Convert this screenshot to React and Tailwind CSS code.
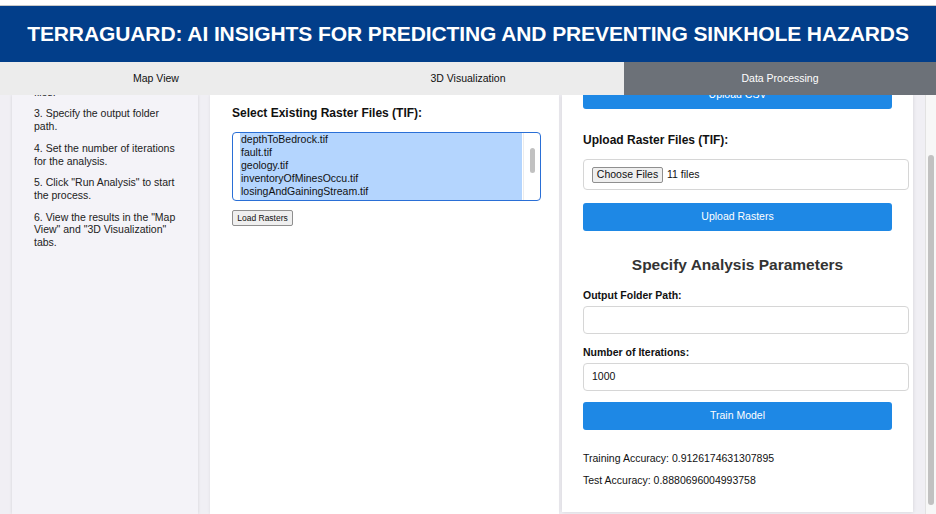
import React from "react";

const steps = [
  { n: "2.", text: "Upload your CSV and raster files." },
  { n: "3.", text: "Specify the output folder path." },
  { n: "4.", text: "Set the number of iterations for the analysis." },
  { n: "5.", text: 'Click "Run Analysis" to start the process.' },
  { n: "6.", text: 'View the results in the "Map View" and "3D Visualization" tabs.' },
];

const rasters = [
  "depthToBedrock.tif",
  "fault.tif",
  "geology.tif",
  "inventoryOfMinesOccu.tif",
  "losingAndGainingStream.tif",
];

const tabs = ["Map View", "3D Visualization", "Data Processing"];

const BlueButton = ({ children, className = "" }) => (
  <button
    className={`w-[309px] h-[28px] bg-[#1e88e5] text-white text-[10.5px] rounded-[3px] flex items-center justify-center ${className}`}
  >
    {children}
  </button>
);

const App = () => {
  return (
    <div className="w-[936px] h-[514px] overflow-hidden bg-[#f0eff4] font-['Liberation_Sans',Arial,sans-serif] text-[#111]">
      <div className="h-[6px] bg-white border-b border-[#c9c9c9]" />
      <header className="h-[56px] bg-[#023e8a] flex items-center justify-center">
        <h1 className="text-white font-bold text-[21px] tracking-[-0.1px]">
          TERRAGUARD: AI INSIGHTS FOR PREDICTING AND PREVENTING SINKHOLE HAZARDS
        </h1>
      </header>
      <nav className="h-[33px] flex bg-[#ececec]">
        {tabs.map((tab, i) => (
          <div
            key={tab}
            className={`flex-1 flex items-center justify-center text-[10.5px] ${
              i === 2 ? "bg-[#6c7178] text-white" : "text-[#111]"
            }`}
          >
            {tab}
          </div>
        ))}
      </nav>

      <div className="flex h-[419px] overflow-hidden">
        {/* sidebar */}
        <div className="pl-[12px] h-full">
          <aside className="w-[186px] h-full bg-[#f4f3f8] shadow-[0_0_3px_rgba(0,0,0,0.12)] overflow-hidden">
            <div className="pl-[22px] pr-[20px] -mt-[22px] flex flex-col gap-[9px] text-[10.5px] leading-[12.7px] text-[#222]">
              {steps.map((s) => (
                <p key={s.n}>
                  {s.n} {s.text}
                </p>
              ))}
            </div>
          </aside>
        </div>

        {/* middle */}
        <section className="ml-[12px] w-[349px] h-full bg-white pl-[22px] pt-[11px] shadow-[0_0_3px_rgba(0,0,0,0.08)]">
          <h2 className="font-bold text-[12px] leading-[15px]">
            Select Existing Raster Files (TIF):
          </h2>
          <div className="mt-[11px] w-[309px] h-[69px] border-[1.5px] border-[#2a6fd6] rounded-[4px] flex overflow-hidden">
            <div className="flex-1 pl-[7px]">
              {rasters.map((r) => (
                <div
                  key={r}
                  className="bg-[#b4d5fe] h-[13px] leading-[13px] text-[10.5px] pl-[1px] w-[282px]"
                >
                  {r}
                </div>
              ))}
              <div className="bg-[#b4d5fe] h-[4px] w-[282px]" />
            </div>
            <div className="w-[17px] border-l border-[#ececec] flex justify-center pt-[15px]">
              <div className="w-[5px] h-[25px] rounded-full bg-[#c1c1c1]" />
            </div>
          </div>
          <button className="mt-[9px] h-[16px] w-[61px] text-[8.5px] bg-[#efefef] border border-[#8f8f8f] rounded-[2px] flex items-center justify-center">
            Load Rasters
          </button>
        </section>

        {/* right card */}
        <section className="ml-[3px] w-[351px] h-[417px] bg-white shadow-[0_0_4px_rgba(0,0,0,0.12)] pl-[21px] overflow-hidden">
          <BlueButton className="-mt-[14px]">Upload CSV</BlueButton>
          <h3 className="mt-[24px] font-bold text-[12px] leading-[15px]">
            Upload Raster Files (TIF):
          </h3>
          <div className="mt-[11px] w-[326px] h-[31px] border border-[#d6d6d6] rounded-[4px] flex items-center pl-[8px] gap-[4px]">
            <button className="h-[16px] w-[71px] text-[10.5px] bg-[#efefef] border border-[#8f8f8f] rounded-[2px] flex items-center justify-center">
              Choose Files
            </button>
            <span className="text-[10.5px]">11 files</span>
          </div>
          <BlueButton className="mt-[13px]">Upload Rasters</BlueButton>
          <h2 className="mt-[25px] w-[309px] text-center font-bold text-[15.5px] leading-[18px] text-[#333]">
            Specify Analysis Parameters
          </h2>
          <label className="block mt-[15px] font-bold text-[10.5px] leading-[13px]">
            Output Folder Path:
          </label>
          <div className="mt-[4px] w-[326px] h-[28px] border border-[#d6d6d6] rounded-[4px]" />
          <label className="block mt-[12px] font-bold text-[10.5px] leading-[13px]">
            Number of Iterations:
          </label>
          <div className="mt-[4px] w-[326px] h-[28px] border border-[#d6d6d6] rounded-[4px] flex items-center pl-[8px] text-[10.5px]">
            1000
          </div>
          <BlueButton className="mt-[11px]">Train Model</BlueButton>
          <p className="mt-[21px] text-[10.5px] leading-[14px]">
            Training Accuracy: 0.9126174631307895
          </p>
          <p className="mt-[8px] text-[10.5px] leading-[14px]">
            Test Accuracy: 0.8880696004993758
          </p>
        </section>

        {/* page scrollbar */}
        <div className="ml-[12px] w-[11px] h-full bg-[#f7f7f7] border-l border-[#e2e2e2] flex justify-center">
          <div className="mt-[60px] w-[6px] h-[350px] rounded-full bg-[#c1c1c1]" />
        </div>
      </div>
    </div>
  );
};

export default App;
